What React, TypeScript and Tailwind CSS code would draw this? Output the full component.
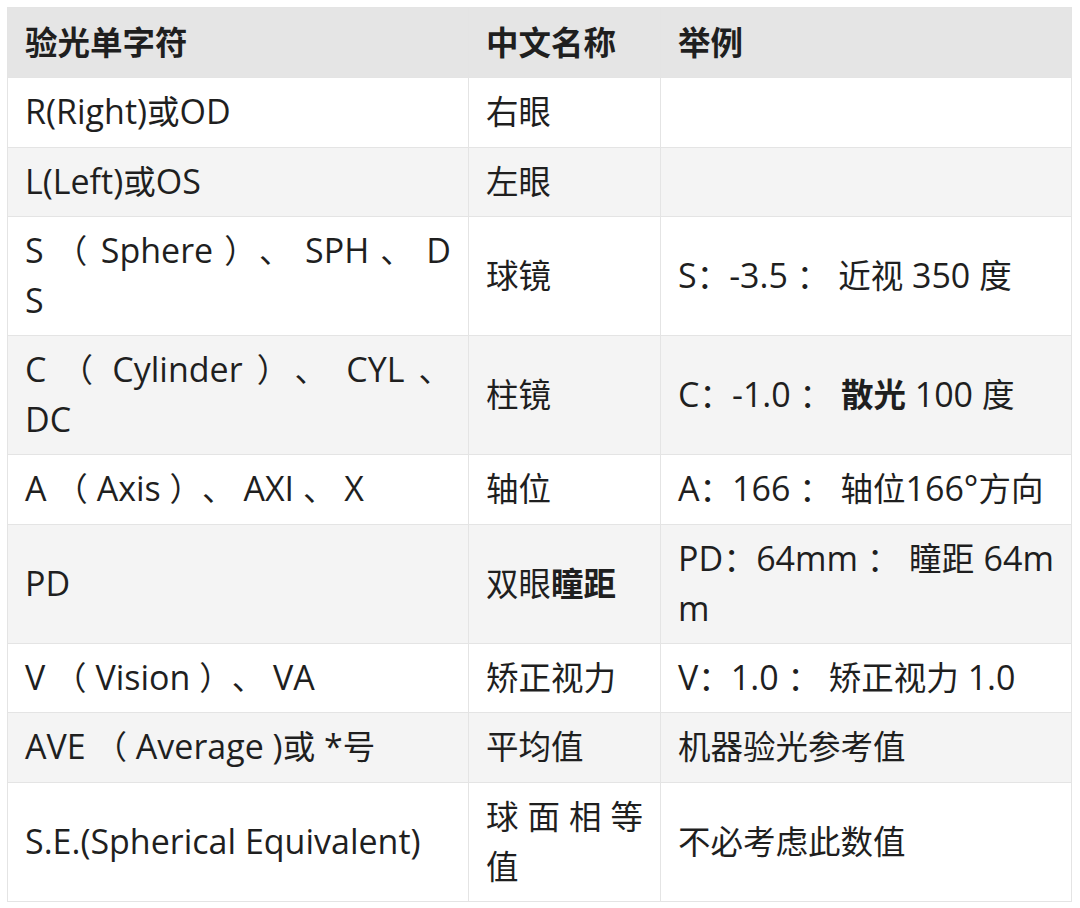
import type { ReactNode } from "react";

// Latin runs are set a bit larger than the CJK text, as in the screenshot
function T({ s }: { s: string }) {
  return (
    <>
      {s.split(/([\x20-\x7E°]+)/).map((p, i) =>
        /^[\x20-\x7E°]+$/.test(p) ? (
          <span key={i} className="text-[34px] leading-[40px]">
            {p}
          </span>
        ) : (
          p
        ),
      )}
    </>
  );
}

// two-line cell whose first line is stretched edge to edge
function Wrap({ first, second }: { first: string; second: string }) {
  return (
    <>
      <span className="block [text-align-last:justify]">
        <T s={first} />
      </span>
      <span className="block">
        <T s={second} />
      </span>
    </>
  );
}

const rows: { a: ReactNode; b: ReactNode; c: ReactNode }[] = [
  { a: <T s="R(Right)或OD" />, b: "右眼", c: "" },
  { a: <T s="L(Left)或OS" />, b: "左眼", c: "" },
  {
    a: <Wrap first="S （ Sphere ）、 SPH 、 D" second="S" />,
    b: "球镜",
    c: <T s="S：-3.5 ： 近视 350 度" />,
  },
  {
    a: <Wrap first="C （ Cylinder ）、 CYL 、" second="DC" />,
    b: "柱镜",
    c: (
      <>
        <T s="C：-1.0 ： " />
        <b className="font-bold">散光</b>
        <T s=" 100 度" />
      </>
    ),
  },
  { a: <T s="A （ Axis ）、 AXI  、 X" />, b: "轴位", c: <T s="A：166 ： 轴位166°方向" /> },
  {
    a: <T s="PD" />,
    b: (
      <>
        双眼<b className="font-bold">瞳距</b>
      </>
    ),
    c: <Wrap first="PD：64mm ： 瞳距 64m" second="m" />,
  },
  { a: <T s="V （ Vision ）、 VA" />, b: "矫正视力", c: <T s="V：1.0 ： 矫正视力 1.0" /> },
  { a: <T s="AVE （ Average )或 *号" />, b: "平均值", c: "机器验光参考值" },
  { a: <T s="S.E.(Spherical Equivalent)" />, b: "球面相等值", c: "不必考虑此数值" },
];

const cell =
  "border border-[#e4e4e4] px-[17px] py-[9px] align-middle text-justify break-all [text-spacing-trim:space-all]";

export default function App() {
  return (
    <div className="bg-white w-[1080px] h-[908px] pt-[7px] pl-[7px] font-['Open_Sans','Noto_Sans_CJK_SC',sans-serif] text-[32.5px] leading-[50px] text-[#1f1f1f]">
      <table className="border-collapse table-fixed w-[1064px]">
        <colgroup>
          <col className="w-[461px]" />
          <col className="w-[192px]" />
          <col className="w-[411px]" />
        </colgroup>
        <thead>
          <tr className="bg-[#e5e5e5] h-[70px]">
            <th className={`${cell} text-left font-bold`}>验光单字符</th>
            <th className={`${cell} text-left font-bold`}>中文名称</th>
            <th className={`${cell} text-left font-bold`}>举例</th>
          </tr>
        </thead>
        <tbody>
          {rows.map((r, i) => (
            <tr key={i} className={i % 2 === 1 ? "bg-[#f4f4f4] h-[69.5px]" : "bg-white h-[69.5px]"}>
              <td className={cell}>{r.a}</td>
              <td className={cell}>{r.b}</td>
              <td className={cell}>{r.c}</td>
            </tr>
          ))}
        </tbody>
      </table>
    </div>
  );
}
